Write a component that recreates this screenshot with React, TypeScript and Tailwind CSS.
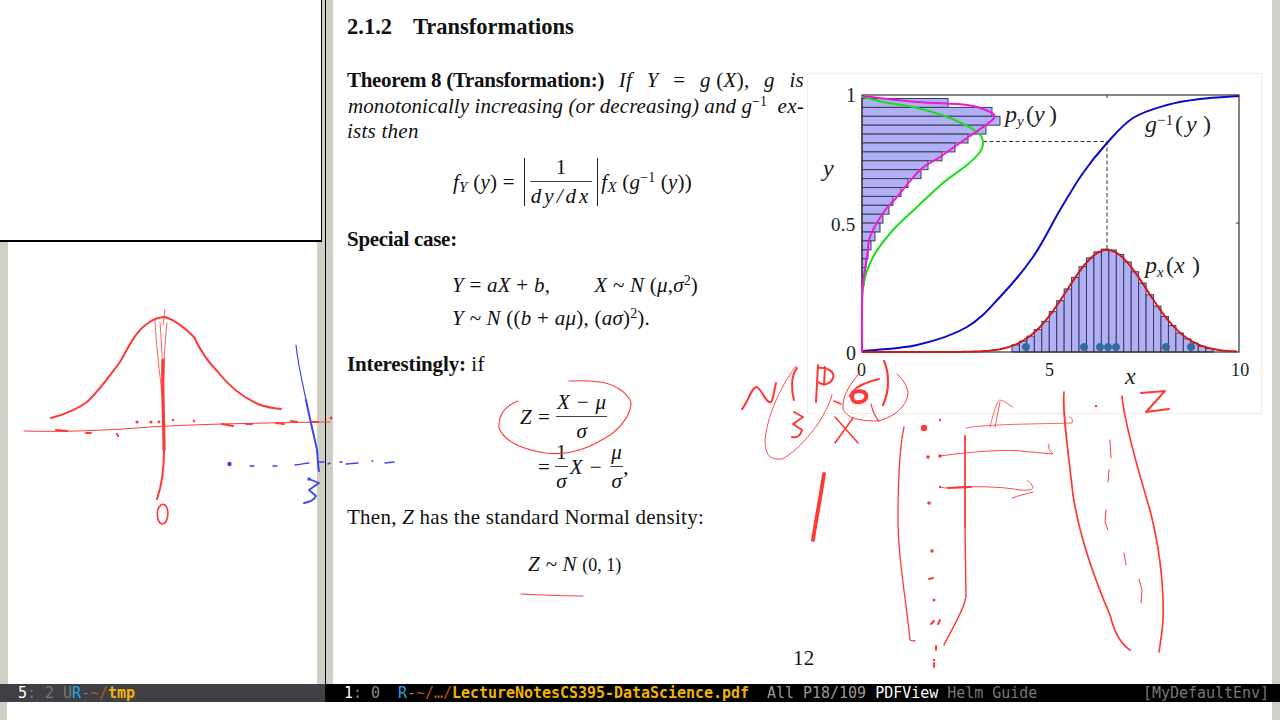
import type { ReactNode } from "react";

const serif = "font-['Liberation_Serif','DejaVu_Serif',serif]";

function gauss(x: number, m: number, s: number) {
  return Math.exp(-((x - m) * (x - m)) / (2 * s * s));
}

function smooth(p: number[][]) {
  let d = `M${p[0][0]} ${p[0][1]}`;
  for (let i = 0; i < p.length - 1; i++) {
    const a = p[Math.max(i - 1, 0)], b = p[i], c = p[i + 1], e = p[Math.min(i + 2, p.length - 1)];
    d += `C${(b[0] + (c[0] - a[0]) / 6).toFixed(1)} ${(b[1] + (c[1] - a[1]) / 6).toFixed(1)} ${(c[0] - (e[0] - b[0]) / 6).toFixed(1)} ${(c[1] - (e[1] - b[1]) / 6).toFixed(1)} ${c[0]} ${c[1]}`;
  }
  return d;
}

const blueCurve = [[862, 351], [917, 345], [967, 327], [1000, 297], [1033, 257], [1060, 210], [1083, 173], [1107, 143], [1133, 118], [1167, 105], [1200, 99], [1239, 96]];
const greenCurve = [[862, 352], [862, 320], [863, 287], [873, 257], [893, 230], [917, 207], [943, 183], [967, 165], [980, 152], [983, 142], [977, 132], [950, 118], [917, 108], [883, 102], [863, 97]];
const magentaCurve = [[862, 352], [862, 310], [863, 283], [867, 258], [870, 237], [883, 213], [897, 197], [920, 170], [940, 157], [967, 138], [983, 127], [994, 118], [990, 112], [967, 105], [917, 102], [863, 96]];

const L = 862, R = 1239, T = 95, B = 352;

function Plot() {
  const ox = 807, oy = 73;
  const xBars: number[][] = [];
  for (let i = 0; i < 27; i++) {
    const x0 = 1012 + i * 7.45;
    const h = 103 * gauss(x0 + 3.7, 1107, 39.5);
    xBars.push([x0, h]);
  }
  const yW = [86, 130, 138, 124, 106, 93, 80, 66, 59, 46, 39, 31, 27, 21, 18, 13, 9, 6, 4, 3, 2];
  const red: string[] = [];
  for (let x = L; x <= R; x += 3) {
    red.push(`${x},${(B - 102 * gauss(x, 1107, 40)).toFixed(1)}`);
  }
  return (
    <svg width="455" height="341" viewBox={`${ox} ${oy} 455 341`} className="block">
      <rect x={ox + 0.5} y={oy + 0.5} width="454" height="340" fill="#fff" stroke="#ececec" />
      {xBars.map(([x, h], i) => (
        <rect key={i} x={x} y={B - h} width="7.45" height={h} fill="#b0b0f6" stroke="#3c3c55" strokeWidth="1" />
      ))}
      {yW.map((w, i) => (
        <rect key={i} x={L} y={98.5 + i * 8.9} width={w} height="8.9" fill="#b0b0f6" stroke="#3c3c55" strokeWidth="1" />
      ))}
      {[1026, 1084, 1100, 1108, 1116, 1166, 1191].map((x) => (
        <circle key={x} cx={x} cy="347" r="3.6" fill="#2f6f9f" stroke="#3d6c9b" />
      ))}
      <rect x={L} y={T} width={R - L} height={B - T} fill="none" stroke="#333" strokeWidth="1.2" />
      <path d="M1107 95v3M1236 223h3" stroke="#333" />
      <path d="M983 141.500H1107V250" fill="none" stroke="#333" strokeWidth="1" strokeDasharray="4 2.5" />
      <path d={smooth(blueCurve)} fill="none" stroke="#0a0acc" strokeWidth="2" />
      <polyline points={red.join(" ")} fill="none" stroke="#d01818" strokeWidth="2" />
      <path d={smooth(greenCurve)} fill="none" stroke="#16e016" strokeWidth="2" />
      <path d={smooth(magentaCurve)} fill="none" stroke="#ee18d8" strokeWidth="2" />
      <g fontFamily="'Liberation Serif',serif" fill="#222">
        <text x="846" y="102" fontSize="20">1</text>
        <text x="831" y="231" fontSize="19">0.5</text>
        <text x="846" y="360" fontSize="20">0</text>
        <text x="857" y="376" fontSize="18">0</text>
        <text x="1045" y="376" fontSize="18">5</text>
        <text x="1231" y="376" fontSize="18">10</text>
        <g fontStyle="italic" fontSize="24">
          <text x="1125" y="384">x</text>
          <text x="823" y="176">y</text>
          <text x="1005" y="122">p</text>
          <text x="1145" y="132">g</text>
          <text x="1145" y="273">p</text>
        </g>
        <text x="1017" y="126" fontSize="15" fontStyle="italic">y</text>
        <text x="1026" y="122" fontSize="24">(</text>
        <text x="1034" y="122" fontSize="24" fontStyle="italic">y</text>
        <text x="1049" y="122" fontSize="24">)</text>
        <text x="1157" y="125" fontSize="15">−1</text>
        <text x="1175" y="132" fontSize="24">(</text>
        <text x="1186" y="132" fontSize="24" fontStyle="italic">y</text>
        <text x="1203" y="132" fontSize="24">)</text>
        <text x="1157" y="277" fontSize="15" fontStyle="italic">x</text>
        <text x="1166" y="273" fontSize="24">(</text>
        <text x="1174" y="273" fontSize="24" fontStyle="italic">x</text>
        <text x="1192" y="273" fontSize="24">)</text>
      </g>
    </svg>
  );
}

const dots: number[][] = [
  [924, 428, 3.2], [940, 420, 1.2], [928, 457, 1.8], [940, 456, 1.8], [940, 487, 1.2], [929, 503, 1.8],
  [932, 551, 1.8], [934, 600, 1.5], [934, 660, 1.2], [1096, 406, 1.2],
  [137, 422, 1.6], [151, 422, 1.6], [159, 422, 1.4], [173, 420, 1.2], [194, 421, 1.2], [331, 418, 1.4],
];

function Ink() {
  return (
    <svg width="1280" height="720" viewBox="0 0 1280 720" className="absolute left-0 top-0 pointer-events-none" fill="none" strokeLinecap="round" strokeLinejoin="round">
      <g stroke="#ff3838">
        <path strokeWidth="2" d="M51 418C62 415 75 411 87 402C100 390 110 375 120 362C128 348 135 332 147 324C153 319 158 317 165 317C175 320 186 329 194 337C200 350 208 362 218 372C228 385 240 396 258 404C268 408 275 408 281 409" />
        <path strokeWidth="1" d="M24 431C60 432 100 431 150 427C200 424 260 423 330 422" />
        <path strokeWidth="0.8" d="M155 320C156 345 160 375 162 395M160 322C162 350 163 372 163 390M167 323C165 340 164 360 164 375M165 309L163 325" />
        <path strokeWidth="3.2" d="M163 360C162 390 164 420 164 450" />
        <path strokeWidth="2" d="M164 450C164 470 162 485 157 499" />
        <path strokeWidth="1.6" d="M161 505C156 508 156 522 162 524C168 524 170 510 165 505C163 504 162 504 161 505Z" />
        <path strokeWidth="2" d="M56 430L67 431M86 433L91 433M222 424L233 426M246 424L252 424M276 423L284 424M291 421L297 422M312 422L318 422M117 434L118 436" />
        {dots.map(([x, y, r]) => (
          <circle key={`${x}-${y}`} cx={x} cy={y} r={r} fill="#ff3838" stroke="none" />
        ))}
        <path strokeWidth="1.1" d="M518 401C505 406 498 415 499 428C504 440 520 449 545 453C570 456 590 448 610 435C624 425 631 412 631 403C628 393 615 384 600 382C585 380 570 381 569 381" />
        <path strokeWidth="1" d="M521 594C540 595 565 596 583 596" />
        <path strokeWidth="2" d="M742 409C748 402 752 386 757 387C762 390 766 404 771 402C774 398 774 390 776 383" />
        <path strokeWidth="0.9" d="M796 366C785 380 768 410 765 440C765 455 770 460 782 459C800 450 825 420 832 395" />
        <path strokeWidth="2" d="M797 368C791 375 791 390 794 400M794 412L803 417L793 424L802 430C800 437 796 438 792 437" />
        <path strokeWidth="2" d="M816 402L818 365M818 368C828 367 835 372 833 378C830 385 823 386 818 382M825 367L824 385" />
        <path strokeWidth="1.6" d="M834 401L841 404M835 417L858 443M853 418L835 443" />
        <path strokeWidth="1" d="M860 372C850 385 842 395 843 409C847 418 858 421 878 421C895 417 908 405 908 392C906 382 900 377 897 374" />
        <path strokeWidth="4" d="M853 393C850 401 855 403 860 402C867 401 868 395 864 392C858 390 853 392 851 396" />
        <path strokeWidth="1.8" d="M852 392C858 385 870 381 879 379" />
        <path strokeWidth="2.2" d="M884 361C889 372 890 390 883 405" />
        <path strokeWidth="1.1" d="M871 404C873 412 876 418 879 421" />
        <path strokeWidth="3.8" d="M824 474C820 500 816 520 813 540" />
        <path strokeWidth="1.3" d="M904 427C899 450 898 480 898 520C898 560 905 590 910 640C912 641 914 641 915 641" />
        <path strokeWidth="1.8" d="M965 436L965 527" />
        <path strokeWidth="1.4" d="M965 527L966 597C962 615 952 628 944 645" />
        <path strokeWidth="0.8" d="M966 428C985 424 1040 424 1072 423C1073 420 1072 417 1069 417M990 427C993 415 997 400 1000 400C1005 401 1009 405 1013 407M995 427L1000 402" />
        <path strokeWidth="0.9" d="M940 456C960 453 1000 449 1020 451L1053 454C1048 450 1048 446 1049 444" />
        <path strokeWidth="0.9" d="M940 487L945 488C965 486 1000 486 1020 490C1030 491 1033 489 1033 487C1030 482 1028 480 1027 481M1033 492C1025 494 1018 496 1012 498" />
        <path strokeWidth="2" d="M948 488L971 487" />
        <path strokeWidth="1.7" d="M1064 392C1062 410 1068 450 1073 495C1080 540 1095 580 1110 615C1115 635 1122 645 1130 650" />
        <path strokeWidth="1.7" d="M1122 396C1124 420 1135 460 1150 510C1160 550 1164 590 1163 620C1162 635 1160 645 1159 652" />
        <path strokeWidth="2" d="M1141 393L1165 391L1146 412L1169 409" />
        <path strokeWidth="1" d="M1110 440L1111 458M1109 470L1108 482M1106 510L1105 522L1108 530M1124 553L1126 565M1139 579L1142 590L1141 603" />
        <path strokeWidth="2" d="M929 579L933 578M931 624L934 621M934 663L934 667M940 620L938 624M936 646L936 650" />
      </g>
      <g stroke="#3c46f0">
        <path strokeWidth="1.2" d="M296 345C298 365 303 385 306 400" />
        <path strokeWidth="2" d="M306 400C310 420 315 440 317 450C318 460 318 468 319 471" />
        <path strokeWidth="1.8" d="M309 479L319 483L309 490L316 496C314 500 310 502 304 503" />
        <circle cx="229.500" cy="464" r="2.200" fill="#3c46f0" stroke="none" />
        <circle cx="309" cy="479" r="1.700" fill="#3c46f0" stroke="none" />
        <path strokeWidth="1.400" d="M250 466L254 466M273 466L277 466M295 465C300 465 305 463 309 463M318 462L324 462M328 464L330 463M340 462L342 462M346 464L358 463M372 461L373 461M385 463L394 462" />
      </g>
    </svg>
  );
}

function Frac({ n, d }: { n: ReactNode; d: ReactNode }) {
  return (
    <span className="inline-flex flex-col items-center align-middle leading-[28px]">
      <span className="px-[1px]">{n}</span>
      <span className="w-full border-t border-[#444]" />
      <span className="px-[1px]">{d}</span>
    </span>
  );
}

function Sup({ children }: { children: ReactNode }) {
  return <sup className="text-[14px] not-italic leading-none tracking-normal">{children}</sup>;
}

function Sub({ children }: { children: ReactNode }) {
  return <sub className="text-[15px] leading-none">{children}</sub>;
}

function R_({ children }: { children: ReactNode }) {
  return <span className="not-italic">{children}</span>;
}

function Document() {
  return (
    <div className={`flex-1 bg-white flex pl-[14px] items-start text-[21px] tracking-[0.25px] text-[#111] leading-[26px] ${serif}`}>
      <div className="w-[457px] shrink-0">
        <h2 className="mt-[14px] font-bold text-[22.5px] leading-[26px] tracking-normal">
          2.1.2<span className="ml-[21px]">Transformations</span>
        </h2>
        <div className="mt-[28px] italic leading-[25.5px]">
          <div className="flex justify-between whitespace-pre">
            <b className="not-italic tracking-[-0.3px]">Theorem 8 (Transformation:)</b>
            <span>If</span>
            <span>Y</span>
            <R_>=</R_>
            <span>g <R_>(</R_>X<R_>),</R_></span>
            <span>g</span>
            <span>is</span>
          </div>
          <div className="flex justify-between pl-[1px]">
            <span className="tracking-[0.08px]">monotonically increasing (or decreasing) and g<Sup>−1</Sup></span>
            <span>ex-</span>
          </div>
          <div>ists then</div>
        </div>
        <div className="mt-[5px] pl-[106px] h-[64px] flex items-center italic whitespace-pre">
          <span className="mr-[4px]">f<Sub>Y</Sub> <R_>(</R_>y<R_>) =</R_></span>
          <span className="ml-[5px] mr-[3px] flex border-x border-[#222] px-[5px] h-[48px] items-center">
            <Frac n={<R_>1</R_>} d={<span className="tracking-[3px]">dy/dx</span>} />
          </span>
          <span>f<Sub>X</Sub> <R_>(</R_>g<Sup>−1</Sup> <R_>(</R_>y<R_>))</R_></span>
        </div>
        <p className="mt-[12px] font-bold tracking-[-0.3px]">Special case:</p>
        <div className="mt-[20px] pl-[105px] italic whitespace-pre">
          <div>Y <R_>=</R_> aX <R_>+</R_> b<R_>,</R_>        X ~ N <R_>(</R_>μ<R_>,</R_>σ<Sup>2</Sup><R_>)</R_></div>
          <div className="mt-[7px]">Y ~ N <R_>((</R_>b <R_>+</R_> aμ<R_>), (</R_>aσ<R_>)</R_><Sup>2</Sup><R_>).</R_></div>
        </div>
        <p className="mt-[20px]"><b className="tracking-[-0.15px]">Interestingly:</b> if</p>
        <div className="mt-[8px] pl-[173px] italic h-[64px] flex items-center">
          Z <R_><span className="mx-[6px]">=</span></R_><Frac n="X − μ" d="σ" />
        </div>
        <div className="-mt-[5px] pl-[191px] italic h-[46px] flex items-center">
          <span className="not-italic mr-[5px]">=</span>
          <Frac n={<R_>1</R_>} d="σ" />
          <span className="mx-[2px] whitespace-pre">X − </span>
          <Frac n="μ" d="σ" />
          <R_>,</R_>
        </div>
        <p className="mt-[14px]">Then, <i>Z</i> has the standard Normal density:</p>
        <div className="mt-[21px] pl-[181px] italic">Z ~ N <span className="not-italic text-[18px] tracking-normal">(0, 1)</span></div>
        <div className="mt-[67px] pl-[446px]">12</div>
      </div>
      <div className="ml-[3px] mt-[73px]"><Plot /></div>
    </div>
  );
}

function Seg({ c, children }: { c: string; children: ReactNode }) {
  return <span className={c}>{children}</span>;
}

export default function App() {
  const fringe = "bg-[#cfcfc3]";
  return (
    <div className="relative w-[1280px] h-[720px] overflow-hidden bg-white flex flex-col">
      <div className="flex h-[684px]">
        <div className={`w-[325px] flex flex-col ${fringe}`}>
          <div className="h-[242px] w-[322px] bg-white border-r border-b-2 border-black shrink-0" />
          <div className="flex-1 flex">
            <div className="w-2" />
            <div className="w-[309px] bg-white" />
          </div>
        </div>
        <div className="w-px bg-black" />
        <div className={`w-[7px] ${fringe}`} />
        <Document />
        <div className={`w-2 ${fringe}`} />
      </div>
      <div className="flex h-[18px] font-['DejaVu_Sans_Mono',monospace] text-[15px] tracking-[-0.03px] leading-[18px] whitespace-pre">
        <div className="w-[325px] bg-[#3f3f46] pl-[18px] text-[#777]">
          <Seg c="text-white">5</Seg><Seg c="text-[#777]">: 2 U</Seg><Seg c="text-[#1ea8e8]">R</Seg><Seg c="text-[#777]">-</Seg><Seg c="text-[#b85a10]">~/</Seg><Seg c="text-[#f0b400] font-bold">tmp</Seg>
        </div>
        <div className="flex-1 bg-black pl-[19px] pr-[11px] flex justify-between text-[#8a8a8a]">
          <span>
            <Seg c="text-white">1</Seg><Seg c="text-[#888]">: 0  </Seg><Seg c="text-[#1ea8e8]">R</Seg><Seg c="text-[#888]">-</Seg><Seg c="text-[#b85a10]">~/…/</Seg><Seg c="text-[#f0b400] font-bold">LectureNotesCS395-DataScience.pdf</Seg>
            <Seg c="text-[#999]">  All P18/109 </Seg><Seg c="text-white">PDFView</Seg><Seg c="text-[#777]"> Helm Guide</Seg>
          </span>
          <span className="text-[#777]">[MyDefaultEnv]</span>
        </div>
      </div>
      <div className="flex h-[18px] justify-between">
        <div className={`w-[7px] ${fringe}`} />
        <div className={`w-2 ${fringe}`} />
      </div>
      <Ink />
    </div>
  );
}
